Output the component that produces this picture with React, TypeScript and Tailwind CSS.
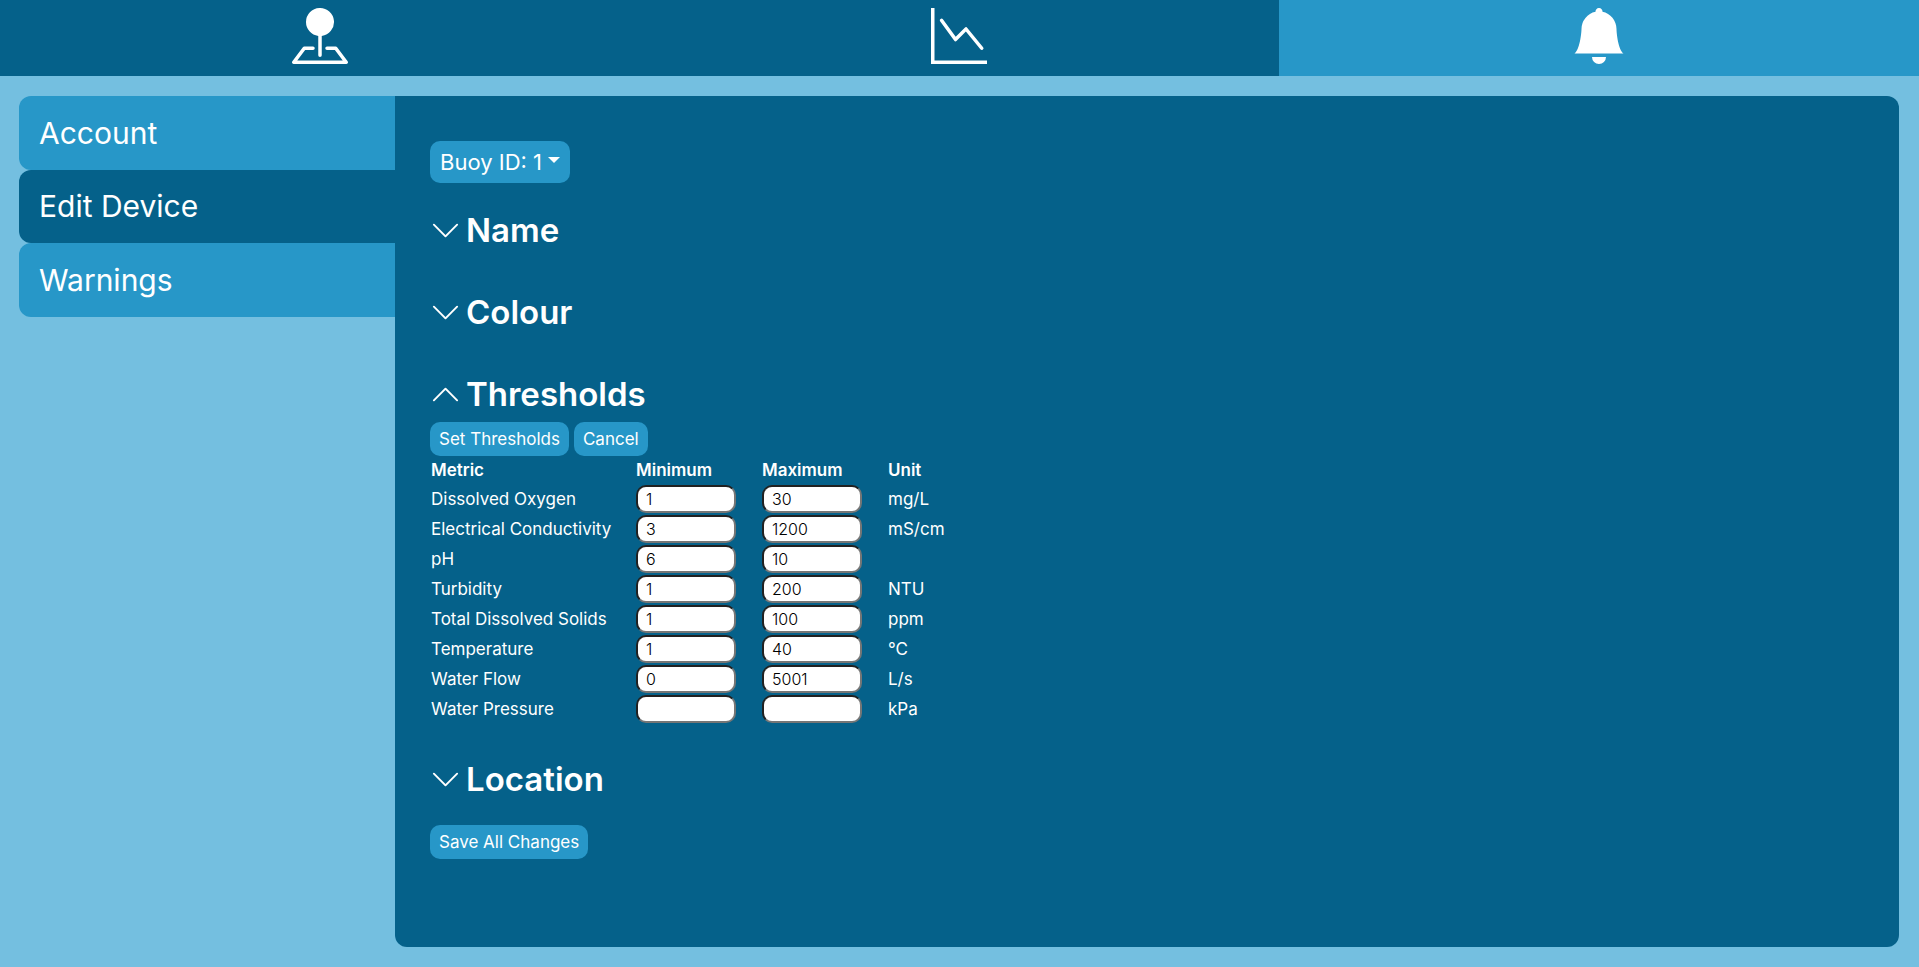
import { useState } from "react";
import {
  BsBellFill,
  BsChevronDown,
  BsChevronUp,
  BsGraphDown,
  BsPinMapFill,
} from "react-icons/bs";

const sections = [
  { label: "Map", Icon: BsPinMapFill, active: false },
  { label: "Graphs", Icon: BsGraphDown, active: false },
  { label: "Alerts", Icon: BsBellFill, active: true },
];

const menu = [
  { label: "Account", active: false },
  { label: "Edit Device", active: true },
  { label: "Warnings", active: false },
];

const initialMetrics = [
  { name: "Dissolved Oxygen", min: "1", max: "30", unit: "mg/L" },
  { name: "Electrical Conductivity", min: "3", max: "1200", unit: "mS/cm" },
  { name: "pH", min: "6", max: "10", unit: "" },
  { name: "Turbidity", min: "1", max: "200", unit: "NTU" },
  { name: "Total Dissolved Solids", min: "1", max: "100", unit: "ppm" },
  { name: "Temperature", min: "1", max: "40", unit: "°C" },
  { name: "Water Flow", min: "0", max: "5001", unit: "L/s" },
  { name: "Water Pressure", min: "", max: "", unit: "kPa" },
];

function SectionHeading({ title, open = false }: { title: string; open?: boolean }) {
  const Chevron = open ? BsChevronUp : BsChevronDown;
  return (
    <h2 className="text-[33px] leading-[48px] font-semibold">
      <button type="button" aria-expanded={open} className="flex items-center gap-[5px]">
        <Chevron className="size-[31px]" aria-hidden="true" />
        {title}
      </button>
    </h2>
  );
}

function ActionButton({ children }: { children: string }) {
  return (
    <button type="button" className="h-[34px] rounded-[10px] bg-[#2797c8] px-[9px]">
      {children}
    </button>
  );
}

function LimitInput({ label, value }: { label: string; value: string }) {
  return (
    <input
      type="text"
      aria-label={label}
      defaultValue={value}
      className="block h-7 w-[100px] rounded-[10px] border-2 border-t-[#212121] border-r-[#767676] border-b-[#767676] border-l-[#212121] bg-white px-2 text-base font-light text-black"
    />
  );
}

function ThresholdTable() {
  return (
    <table className="border-collapse text-left">
      <thead>
        <tr className="h-7">
          <th className="w-[206px] pl-px font-semibold">Metric</th>
          <th className="w-[126px] font-semibold">Minimum</th>
          <th className="w-[126px] font-semibold">Maximum</th>
          <th className="font-semibold">Unit</th>
        </tr>
      </thead>
      <tbody>
        {initialMetrics.map((metric) => (
          <tr key={metric.name} className="h-[30px]">
            <td className="pl-px">{metric.name}</td>
            <td className="py-px">
              <LimitInput label={`${metric.name} minimum`} value={metric.min} />
            </td>
            <td className="py-px">
              <LimitInput label={`${metric.name} maximum`} value={metric.max} />
            </td>
            <td>{metric.unit}</td>
          </tr>
        ))}
      </tbody>
    </table>
  );
}

export default function App() {
  const [buoy, setBuoy] = useState("1");

  return (
    <div className="flex min-h-screen flex-col bg-[#74bfe0] font-['Inter',sans-serif] text-[17px] leading-6 text-white">
      <header>
        <nav className="grid grid-cols-3 bg-[#05618a]">
          {sections.map(({ label, Icon, active }) => (
            <a
              key={label}
              href={`#${label.toLowerCase()}`}
              aria-label={label}
              className={`flex justify-center pt-2 pb-3 ${active ? "bg-[#2797c8]" : ""}`}
            >
              <Icon className="size-14" aria-hidden="true" />
            </a>
          ))}
        </nav>
      </header>

      <div className="flex flex-1 py-5 pr-5 pl-[19px]">
        <nav className="grid h-[221px] w-1/5 shrink-0 grid-rows-3">
          {menu.map(({ label, active }) => (
            <a
              key={label}
              href={`#${label.toLowerCase().replace(" ", "-")}`}
              className={`flex items-center rounded-l-xl px-5 text-[30px] ${
                active ? "bg-[#05618a]" : "bg-[#2797c8]"
              }`}
            >
              {label}
            </a>
          ))}
        </nav>

        <main className="flex flex-1 flex-col items-start rounded-r-xl rounded-bl-xl bg-[#05618a] px-[35px] pt-[45px] pb-20">
          <div className="relative mb-[23px]">
            <select
              aria-label="Buoy"
              value={buoy}
              onChange={(event) => setBuoy(event.target.value)}
              className="h-[42px] appearance-none rounded-[10px] bg-[#2797c8] pr-7 pl-[10px] text-[22px] leading-8"
            >
              <option value="1">Buoy ID: 1</option>
            </select>
            <svg
              viewBox="0 0 12 6"
              className="pointer-events-none absolute top-4 right-[10px] h-[6px] w-3 fill-white"
              aria-hidden="true"
            >
              <path d="M0 0H12L6 6Z" />
            </svg>
          </div>

          <div className="flex flex-col gap-[34px]">
            <SectionHeading title="Name" />
            <SectionHeading title="Colour" />
            <section>
              <SectionHeading title="Thresholds" open />
              <div className="mt-1 flex gap-[5px]">
                <ActionButton>Set Thresholds</ActionButton>
                <ActionButton>Cancel</ActionButton>
              </div>
              <ThresholdTable />
            </section>
          </div>

          <div className="mt-[31px] flex flex-col items-start gap-[22px]">
            <SectionHeading title="Location" />
            <ActionButton>Save All Changes</ActionButton>
          </div>
        </main>
      </div>
    </div>
  );
}
